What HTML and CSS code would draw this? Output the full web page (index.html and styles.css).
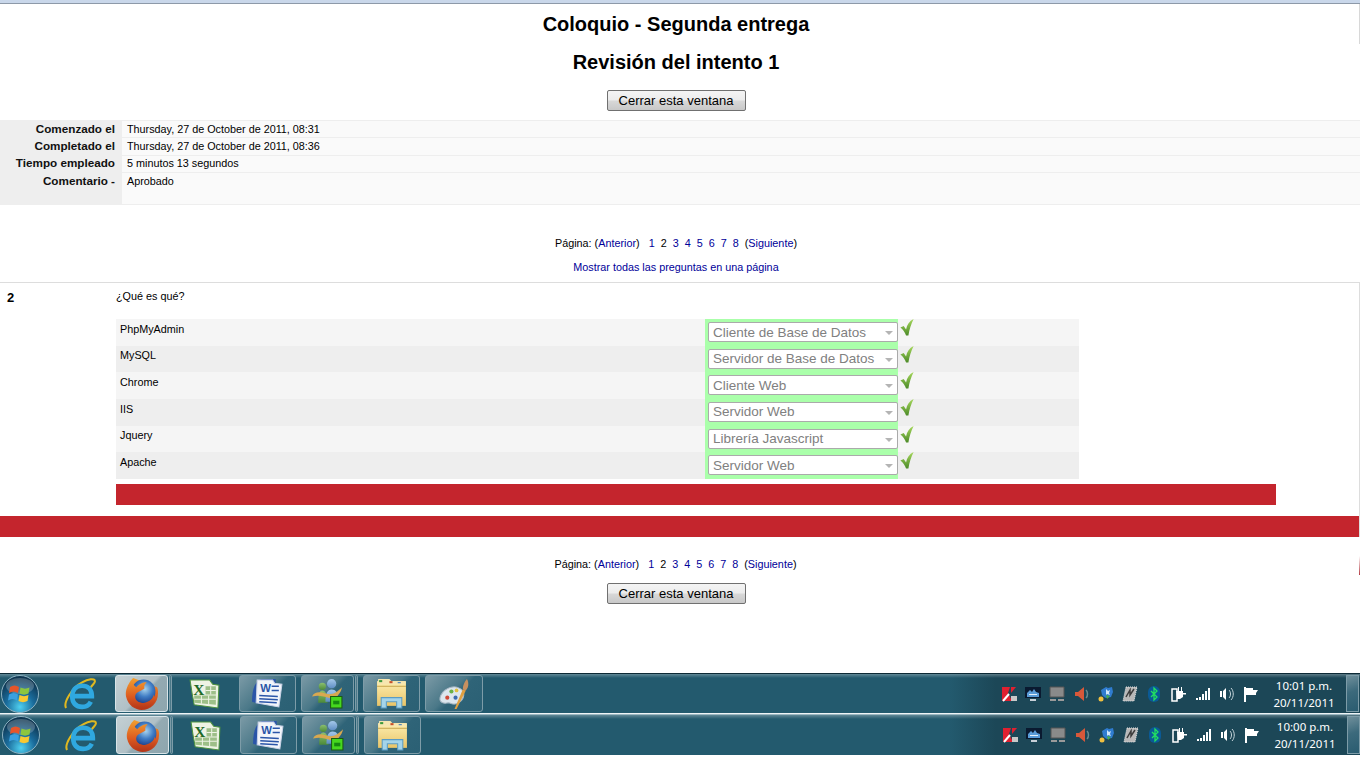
FILE: index.html
```html
<!DOCTYPE html>
<html lang="es">
<head>
    <meta charset="UTF-8">
    <title>Coloquio - Segunda entrega</title>
    <link rel="stylesheet" href="styles.css">
</head>
<body>
<svg class="defs" width="0" height="0">
    <defs>
        <radialGradient id="orb" cx="50%" cy="85%" r="75%">
            <stop offset="0" stop-color="#4fd0f0"/><stop offset=".5" stop-color="#1a6c9c"/><stop offset="1" stop-color="#0e3550"/>
        </radialGradient>
        <radialGradient id="globe" cx="55%" cy="40%" r="60%">
            <stop offset="0" stop-color="#a8d4ee"/><stop offset=".55" stop-color="#3f7cc4"/><stop offset="1" stop-color="#1f4590"/>
        </radialGradient>
        <linearGradient id="fox" x1="0" y1="0" x2="0" y2="1">
            <stop offset="0" stop-color="#f2a030"/><stop offset=".6" stop-color="#dc5a20"/><stop offset="1" stop-color="#b43618"/>
        </linearGradient>
        <linearGradient id="folder" x1="0" y1="0" x2="0" y2="1">
            <stop offset="0" stop-color="#fdeeb0"/><stop offset="1" stop-color="#e8c468"/>
        </linearGradient>
        <linearGradient id="tick" x1="0" y1="0" x2="0" y2="1">
            <stop offset="0" stop-color="#a6d85c"/><stop offset="1" stop-color="#4c8a28"/>
        </linearGradient>
        <linearGradient id="persona-g" x1="0" y1="0" x2="0" y2="1">
            <stop offset="0" stop-color="#8cc070"/><stop offset="1" stop-color="#4c8a38"/>
        </linearGradient>
        <linearGradient id="persona-a" x1="0" y1="0" x2="0" y2="1">
            <stop offset="0" stop-color="#a4c8ea"/><stop offset="1" stop-color="#5f8ec4"/>
        </linearGradient>

        <symbol id="i-start" viewBox="0 0 38 38">
            <circle cx="19" cy="19" r="18.5" fill="url(#orb)" stroke="#8fb4c4"/>
            <ellipse cx="19" cy="11" rx="14" ry="8" fill="#fff" opacity=".22"/>
            <path d="M9 12c3-2 6-2 9 0l-1 6c-3-2-6-2-9 0z" fill="#e8552a"/>
            <path d="M19.500 12.500c3 1.500 6 1.500 9 0l-1 6c-3 1.500-6 1.500-9 0z" fill="#8cc63e"/>
            <path d="M8 19.500c3-2 6-2 9 0l-1 6c-3-2-6-2-9 0z" fill="#3aa0e0"/>
            <path d="M18.500 20c3 1.500 6 1.500 9 0l-1 6c-3 1.500-6 1.500-9 0z" fill="#f8c830"/>
        </symbol>
        <symbol id="i-ie" viewBox="0 0 32 32">
            <path d="M2 30C-1 25 8 10 18 5c5-3 12-4 12-1 0 2-2 3-4 6" fill="none" stroke="#e0b820" stroke-width="2"/>
            <path d="M8 18.500H27C27 12 23 8.500 17.500 8.500 11.500 8.500 8 13 8 19s3.500 10 9.500 10c4 0 7-2 8.500-5" fill="none" stroke="#2fa8e0" stroke-width="4.500"/>
        </symbol>
        <symbol id="i-firefox" viewBox="0 0 32 32">
            <path d="M8 1C2 7 0 14 1 19c2 9 9 13 15 13 9 0 16-7 16-16 0-2 0-4-1-6z" fill="url(#fox)"/>
            <circle cx="18" cy="14" r="11.500" fill="url(#globe)"/>
            <path d="M8 1c-1 4 0 7 3 9 2-3 6-5 10-5-2 2-3 4-2 6-3 3-8 3-9 7-1 5 4 8 9 7 5-1 8-4 9-8l1 7c-4 6-12 9-19 5C2 26 0 18 3 10c1-3 3-7 5-9z" fill="url(#fox)"/>
        </symbol>
        <symbol id="i-excel" viewBox="0 0 32 32">
            <path d="M2 3h19l3 4 6 1-1 22-23-3-2-11z" fill="#eef3e4" stroke="#4e9440"/>
            <path d="M6 18h21v9l-21-2z M17 9h10v8H17z" fill="#9dbf88"/>
            <path d="M6 21.500h21M13 18v8M20 18v9M17 13h10M22 9v8" stroke="#eef3e4"/>
            <text x="5" y="17" class="svg-x">X</text>
        </symbol>
        <symbol id="i-word" viewBox="0 0 32 32">
            <path d="M1 24C1 12 4 4 10 2h14v3L10 27z" fill="#2a55a8"/>
            <path d="M6 3h15l2 3 7 1-3 22-22-4z" fill="#f2f5fa" stroke="#c8d2e6"/>
            <text x="9" y="15" class="svg-w">W</text>
            <path d="M20 9h7M20 13h7M8 18l18 1M8 21l18 1M8 24l17 1" stroke="#2a55a8" stroke-width="1.500"/>
        </symbol>
        <symbol id="i-msn" viewBox="0 0 32 32">
            <circle cx="11" cy="9" r="3.500" fill="url(#persona-g)"/>
            <circle cx="20" cy="6.500" r="4.500" fill="url(#persona-a)"/>
            <path d="M7 25c0-8 1-12 4-12s5 4 5 12z" fill="url(#persona-g)"/>
            <path d="M14 24c0-8 2-12 6-12s6 3 6 8v4z" fill="url(#persona-a)"/>
            <path d="M1 19c2-5 8-5 13-3 6 2 10 0 16-6-1 7-7 12-13 10-5-1-9-3-16-1z" fill="#d8a850"/>
            <path d="M19 19h11v11H19z" fill="#46d81e" stroke="#1a5a10"/>
            <path d="M21.500 23h6v3.500h-6z" fill="#168a10"/>
        </symbol>
        <symbol id="i-explorer" viewBox="0 0 32 32">
            <path d="M2 4h28v24H2z" fill="url(#folder)"/>
            <path d="M3 2h11l2 2h13v3H3z" fill="#f6e6b0"/>
            <path d="M4 3h3v2H4z" fill="#3c9a3c"/><path d="M14 4h3v2h-3z" fill="#c8502a"/><path d="M22 5h3v1h-3z" fill="#3c78b8"/>
            <path d="M2 9h28" stroke="#c8a850"/>
            <path d="M6 20h20v10h-5v-6H11v6H6z" fill="#a4d4ea" stroke="#5a9cc4"/>
        </symbol>
        <symbol id="i-paint" viewBox="0 0 32 32">
            <path d="M2 20C4 12 14 7 21 11c6 3 5 10-1 14-5 3-7 0-10 0-4 1-9 0-8-5z" fill="#dce6ee" stroke="#a8b8c4"/>
            <circle cx="9" cy="20" r="2" fill="#d04a38"/><circle cx="13" cy="14" r="2" fill="#68b048"/><circle cx="18" cy="13" r="1.800" fill="#e0c040"/><circle cx="17" cy="20" r="2" fill="#3a6ab0"/>
            <path d="M24 12l-8 19 2 0 9-18z" fill="#e0a040"/>
            <path d="M24 12c0-4 2-8 4-10 2 3 2 8-1 11z" fill="#c89060"/>
        </symbol>

        <symbol id="t-kaspersky" viewBox="0 0 16 16">
            <path d="M1 1h8l-2 6 4 8H1z" fill="#e02030"/>
            <path d="M10 1h5l-5 6z" fill="#e02030"/>
            <path d="M2 15l6-7" stroke="#fff" stroke-width="2"/>
            <path d="M10 10h6v5h-6z" fill="#c8c8c8"/>
        </symbol>
        <symbol id="t-screen" viewBox="0 0 16 16">
            <path d="M0 1h16v11H0z" fill="#0a1a30"/>
            <path d="M2 7l3-3 2 2 2-3 2 3 3 1v4H2z" fill="#5a9cd8"/>
            <path d="M4 8h8v1H4z" fill="#e4f0fa"/>
            <path d="M5 13h6v2H5z" fill="#c8d0d8"/>
        </symbol>
        <symbol id="t-grey" viewBox="0 0 16 16">
            <path d="M1 1h14v10H1z" fill="#8a8a8a" stroke="#555"/>
            <path d="M1 13h6v2H1zM9 13h6v2H9z" fill="#9a9a9a"/>
        </symbol>
        <symbol id="t-speaker" viewBox="0 0 16 16">
            <path d="M1 6h3l6-5v14l-6-5H1z" fill="#d8583a"/>
            <path d="M12 4c2 2 2 6 0 8" fill="none" stroke="#6a8a90" stroke-width="1.500"/>
        </symbol>
        <symbol id="t-puzzle" viewBox="0 0 16 16">
            <path d="M3 4l5-3 2 1 4-1 1 5-2 5-5 1-2-1-2-2z" fill="#2f7cd0"/>
            <path d="M8 3l2 2 2-1-1 3 1 2-3-1-1 1z" fill="#cfe6fa"/>
            <path d="M8 9l4 1-3 3z" fill="#48b048"/>
            <circle cx="3" cy="13" r="2.500" fill="#f0c040"/>
        </symbol>
        <symbol id="t-disk" viewBox="0 0 16 16">
            <path d="M4 1h11l-3 14H1z" fill="#b8b8b8" stroke="#e4e4e4" stroke-dasharray="1 1"/>
            <path d="M4 11l4-7v5l4-6" fill="none" stroke="#3c3c3c" stroke-width="1.500"/>
        </symbol>
        <symbol id="t-bluetooth" viewBox="0 0 16 16">
            <rect x="2" width="12" height="16" rx="6" fill="#0a5a96"/>
            <path d="M5 5l6 6-3 3V2l3 3-6 6" fill="none" stroke="#22e060" stroke-width="1.300"/>
        </symbol>
        <symbol id="t-plug" viewBox="0 0 16 16">
            <path d="M2 3h5v12H2z" fill="none" stroke="#fff" stroke-width="1.500"/>
            <path d="M6 5h7v6l-3 2H7z" fill="#fff"/>
            <path d="M8 1h1v4H8zM11 1h1v4h-1z" fill="#fff"/><path d="M12 7h4v1.500h-4z" fill="#fff"/>
        </symbol>
        <symbol id="t-signal" viewBox="0 0 16 16">
            <path d="M1 12h2v2H1zM4 11h2v3H4zM7 8h2v6H7zM10 5h2v9h-2zM13 2h2v12h-2z" fill="#fff"/>
        </symbol>
        <symbol id="t-volume" viewBox="0 0 16 16">
            <path d="M1 5h2v6H1zM4 5l3-3v12l-3-3z" fill="#fff"/>
            <path d="M10 4c2 2 2 6 0 8M12 2c3 3 3 9 0 12" fill="none" stroke="#c4d4da"/>
        </symbol>
        <symbol id="t-flag" viewBox="0 0 16 16">
            <path d="M1 1h2v15H1z" fill="#fff"/>
            <path d="M3 2h7v7H3zM10 4h5l-2 3 0 2h-3z" fill="#fff"/>
        </symbol>
        <symbol id="i-tick" viewBox="0 0 14 18">
            <path d="M0 9l3.500-1.500 2.500 3.500C7 6 9.500 2 14 0c-2.500 5-4.500 11-5.500 17.500H6C5 14 2.500 11 0 9z" fill="url(#tick)"/>
        </symbol>
    </defs>
</svg>

<div class="page">
    <div class="topbar"></div>
    <h1 class="titulo">Coloquio - Segunda entrega</h1>
    <h2 class="subtitulo">Revisión del intento 1</h2>
    <div class="cerrar"><button type="button">Cerrar esta ventana</button></div>

    <div class="resumen">
        <div class="fila"><div class="rotulo">Comenzado el</div><div class="dato">Thursday, 27 de October de 2011, 08:31</div></div>
        <div class="fila"><div class="rotulo">Completado el</div><div class="dato">Thursday, 27 de October de 2011, 08:36</div></div>
        <div class="fila"><div class="rotulo">Tiempo empleado</div><div class="dato">5 minutos 13 segundos</div></div>
        <div class="fila"><div class="rotulo">Comentario -</div><div class="dato">Aprobado</div></div>
    </div>

    <div class="paginas paginas-arriba">Página: (<a href="#">Anterior</a>)&nbsp;&nbsp; <a href="#">1</a>&nbsp; 2&nbsp; <a href="#">3</a>&nbsp; <a href="#">4</a>&nbsp; <a href="#">5</a>&nbsp; <a href="#">6</a>&nbsp; <a href="#">7</a>&nbsp; <a href="#">8</a>&nbsp; (<a href="#">Siguiente</a>)</div>
    <div class="paginas mostrar"><a href="#">Mostrar todas las preguntas en una página</a></div>

    <div class="pregunta">
        <div class="numero">2</div>
        <div class="contenido">
            <div class="enunciado">¿Qué es qué?</div>
            <div class="respuestas">
                <div class="resp">
                    <div class="resp-texto">PhpMyAdmin</div>
                    <div class="resp-sel"><span class="combo"><select disabled><option>Cliente de Base de Datos</option></select></span></div>
                    <svg class="tick"><use href="#i-tick"/></svg>
                </div>
                <div class="resp">
                    <div class="resp-texto">MySQL</div>
                    <div class="resp-sel"><span class="combo"><select disabled><option>Servidor de Base de Datos</option></select></span></div>
                    <svg class="tick"><use href="#i-tick"/></svg>
                </div>
                <div class="resp">
                    <div class="resp-texto">Chrome</div>
                    <div class="resp-sel"><span class="combo"><select disabled><option>Cliente Web</option></select></span></div>
                    <svg class="tick"><use href="#i-tick"/></svg>
                </div>
                <div class="resp">
                    <div class="resp-texto">IIS</div>
                    <div class="resp-sel"><span class="combo"><select disabled><option>Servidor Web</option></select></span></div>
                    <svg class="tick"><use href="#i-tick"/></svg>
                </div>
                <div class="resp">
                    <div class="resp-texto">Jquery</div>
                    <div class="resp-sel"><span class="combo"><select disabled><option>Librería Javascript</option></select></span></div>
                    <svg class="tick"><use href="#i-tick"/></svg>
                </div>
                <div class="resp">
                    <div class="resp-texto">Apache</div>
                    <div class="resp-sel"><span class="combo"><select disabled><option>Servidor Web</option></select></span></div>
                    <svg class="tick"><use href="#i-tick"/></svg>
                </div>
            </div>
            <div class="barra-roja"></div>
        </div>
    </div>
    <div class="barra-ancha"></div>

    <div class="pie">
        <div class="paginas">Página: (<a href="#">Anterior</a>)&nbsp;&nbsp; <a href="#">1</a>&nbsp; 2&nbsp; <a href="#">3</a>&nbsp; <a href="#">4</a>&nbsp; <a href="#">5</a>&nbsp; <a href="#">6</a>&nbsp; <a href="#">7</a>&nbsp; <a href="#">8</a>&nbsp; (<a href="#">Siguiente</a>)</div>
        <div class="cerrar cerrar-pie"><button type="button">Cerrar esta ventana</button></div>
    </div>
</div>

<div class="taskbar">
    <div class="start"><svg class="orbe"><use href="#i-start"/></svg></div>
    <div class="task task-ie"><svg><use href="#i-ie"/></svg></div>
    <div class="task boton activo task-ff"><svg><use href="#i-firefox"/></svg></div>
    <div class="astilla"></div>
    <div class="task task-xl tras-astilla"><svg><use href="#i-excel"/></svg></div>
    <div class="task boton task-wd"><svg><use href="#i-word"/></svg></div>
    <div class="task boton task-ms"><svg><use href="#i-msn"/></svg></div>
    <div class="astilla"></div>
    <div class="task boton task-ex"><svg><use href="#i-explorer"/></svg></div>
    <div class="task boton task-pt"><svg><use href="#i-paint"/></svg></div>
    <div class="tray">
        <svg><use href="#t-kaspersky"/></svg><svg><use href="#t-screen"/></svg><svg><use href="#t-grey"/></svg><svg><use href="#t-speaker"/></svg><svg><use href="#t-puzzle"/></svg><svg><use href="#t-disk"/></svg><svg><use href="#t-bluetooth"/></svg><svg><use href="#t-plug"/></svg><svg><use href="#t-signal"/></svg><svg><use href="#t-volume"/></svg><svg><use href="#t-flag"/></svg>
    </div>
    <div class="reloj">10:01 p.m.<br>20/11/2011</div>
    <div class="escritorio"></div>
</div>

<div class="taskbar taskbar-2">
    <div class="start"><svg class="orbe"><use href="#i-start"/></svg></div>
    <div class="task task-ie"><svg><use href="#i-ie"/></svg></div>
    <div class="task boton activo task-ff"><svg><use href="#i-firefox"/></svg></div>
    <div class="astilla"></div>
    <div class="task task-xl tras-astilla"><svg><use href="#i-excel"/></svg></div>
    <div class="task boton task-wd"><svg><use href="#i-word"/></svg></div>
    <div class="task boton task-ms"><svg><use href="#i-msn"/></svg></div>
    <div class="astilla"></div>
    <div class="task boton task-ex"><svg><use href="#i-explorer"/></svg></div>
    <div class="tray">
        <svg><use href="#t-kaspersky"/></svg><svg><use href="#t-screen"/></svg><svg><use href="#t-grey"/></svg><svg><use href="#t-speaker"/></svg><svg><use href="#t-puzzle"/></svg><svg><use href="#t-disk"/></svg><svg><use href="#t-bluetooth"/></svg><svg><use href="#t-plug"/></svg><svg><use href="#t-signal"/></svg><svg><use href="#t-volume"/></svg><svg><use href="#t-flag"/></svg>
    </div>
    <div class="reloj">10:00 p.m.<br>20/11/2011</div>
    <div class="escritorio"></div>
</div>
</body>
</html>
```

FILE: styles.css
```css
html, body {
    margin: 0;
    background: #fff;
    overflow: hidden;
}
body {
    width: 1366px;
    height: 768px;
    font-family: "Liberation Sans", Arial, sans-serif;
    color: #000;
}
.defs {
    display: block;
}
a {
    color: #000099;
    text-decoration: none;
}

.page {
    width: 1360px;
    height: 673px;
}
.topbar {
    height: 3px;
    background-color: #c9d7ea;
    border-bottom: 1px solid #8d99a8;
}
.titulo, .subtitulo {
    margin: 0;
    padding-right: 8px;
    font-size: 20px;
    font-weight: bold;
    text-align: center;
}
.titulo {
    padding-right: 7px;
    line-height: 40px;
    border-right: 1px solid #d8d8d8;
}
.subtitulo {
    line-height: 36px;
}
.cerrar {
    margin-top: 10px;
    padding-right: 8px;
    text-align: center;
}
.cerrar button {
    display: block;
    width: 139px;
    height: 21px;
    margin: 0 auto;
    padding: 0;
    font-family: inherit;
    font-size: 13px;
    color: #000;
    border: 1px solid #707070;
    border-radius: 2px;
    background: linear-gradient(#f4f4f4 0, #ececec 48%, #d8d8d8 52%, #c8c8c8 100%);
}

.resumen {
    margin-top: 9px;
    border-top: 1px solid #eee;
    font-size: 10.800px;
}
.fila {
    display: flex;
    height: 17px;
    line-height: 16px;
}
.fila:nth-child(2) {
    height: 18px;
}
.fila:nth-child(3) {
    line-height: 14px;
}
.fila:nth-child(4) {
    height: 32px;
}
.rotulo {
    width: 115px;
    padding-right: 7px;
    text-align: right;
    font-size: 11.700px;
    font-weight: bold;
    background-color: #eee;
    color: #111;
}
.dato {
    flex: 1;
    padding-left: 5px;
    background-color: #fafafa;
    border-bottom: 1px solid #eee;
}

.paginas {
    padding-right: 8px;
    font-size: 10.800px;
    line-height: 16px;
    text-align: center;
}
.paginas-arriba {
    margin-top: 30px;
}
.mostrar {
    margin-top: 8px;
}

.pregunta {
    display: flex;
    margin-top: 7px;
    height: 233px;
    border-top: 1px solid #ddd;
    border-right: 1px solid #ddd;
}
.numero {
    width: 109px;
    padding: 7px 0 0 7px;
    font-size: 13px;
    font-weight: bold;
    line-height: 15px;
}
.contenido {
    flex: 1;
}
.enunciado {
    height: 36px;
    padding-top: 7px;
    box-sizing: border-box;
    font-size: 10.800px;
    line-height: 13px;
}
.respuestas {
    width: 963px;
}
.resp {
    display: flex;
    height: 26.670px;
}
.resp:nth-child(odd) {
    background-color: #f5f5f5;
}
.resp:nth-child(even) {
    background-color: #eee;
}
.resp-texto {
    width: 585px;
    padding: 2.800px 0 0 4px;
    font-size: 10.800px;
    line-height: 14px;
}
.resp-sel {
    width: 190px;
    padding: 3px 0 0 3px;
    background-color: #aaffaa;
}
.combo {
    display: block;
    position: relative;
    height: 20px;
}
.combo select {
    display: block;
    width: 100%;
    height: 20px;
    padding: 0 0 0 4px;
    font-family: inherit;
    font-size: 13.500px;
    color: #808080;
    opacity: 1;
    background: #fff;
    border: 1px solid #aaa;
    border-radius: 2px;
    appearance: none;
}
.combo::after {
    content: "";
    position: absolute;
    right: 5px;
    top: 9px;
    border-left: 4px solid transparent;
    border-right: 4px solid transparent;
    border-top: 4px solid #b4b4b4;
}
.tick {
    width: 14px;
    height: 17px;
    margin-left: 2px;
}
.barra-roja {
    width: 1160px;
    height: 21px;
    margin-top: 5px;
    background-color: #c4252d;
}
.barra-ancha {
    height: 21px;
    background-color: #c4252d;
    border-right: 1px solid #ddd;
}

.pie {
    height: 38px;
    padding-top: 19px;
    box-sizing: border-box;
    border-right: 1px solid transparent;
    border-image: linear-gradient(transparent 19px, #b03038 38px, transparent 38px) 1;
}
.cerrar-pie {
    margin-top: 11px;
    padding-right: 7px;
}

.taskbar {
    display: flex;
    align-items: stretch;
    box-sizing: border-box;
    width: 1360px;
    height: 41px;
    padding: 1px 1px 1px 0;
    background: linear-gradient(rgba(255, 255, 255, .28) 0, rgba(255, 255, 255, 0) 4px),
        linear-gradient(90deg, #235a6e 0, #235a6e 950px, #1c4757 996px, #1c4757 100%);
    border-top: 1px solid #0d2a36;
    border-bottom: 1px solid #eef4f6;
}
.taskbar-2 {
    padding-left: 1px;
    padding-right: 0;
    border-top-color: #9cb8c2;
    border-bottom: 0;
}
.start {
    display: flex;
    align-items: center;
    width: 45px;
}
.orbe {
    width: 38px;
    height: 38px;
    margin-left: 1px;
}
.task {
    display: flex;
    align-items: center;
    justify-content: center;
    box-sizing: border-box;
    margin-left: 5px;
}
.task svg {
    width: 33px;
    height: 33px;
}
.boton {
    border: 1px solid #7d9ca8;
    border-radius: 3px;
    background: linear-gradient(135deg, #7b9aa6 0, #4a7888 45%, #2f6478 55%, #2b6074 100%);
}
.activo {
    border-color: #d8e4e8;
    background: linear-gradient(135deg, #c4d0d4 0, #b0c0c6 50%, #94aab2 55%, #8ea6ae 100%);
}
.task-ie { width: 60px; }
.task-ff { width: 53px; }
.task-xl { width: 59px; }
.task-wd { width: 57px; }
.task-ms { width: 53px; }
.task-ex { width: 57px; }
.task-pt { width: 58px; }
.astilla {
    box-sizing: border-box;
    width: 3px;
    margin-left: 1px;
    border: 1px solid #7d9ca8;
    border-radius: 2px;
    background-color: #4a7888;
}
.tras-astilla {
    margin-left: 3px;
}
.tray {
    display: flex;
    align-items: center;
    box-sizing: border-box;
    width: 265px;
    margin-left: auto;
}
.tray svg {
    flex: 0 0 16px;
    width: 16px;
    height: 16px;
    margin: 0 4.100px;
}
.reloj {
    width: 84px;
    padding-top: 2px;
    font-family: "Noto Sans", sans-serif;
    font-size: 11.500px;
    line-height: 17px;
    text-align: center;
    color: #fff;
}
.escritorio {
    width: 13px;
    border: 1px solid #7d9ca8;
    box-sizing: border-box;
    background: linear-gradient(160deg, #6f8f9b 0, #3c6a7c 45%, #2a5c70 100%);
}
.svg-x {
    font: bold 15px "Liberation Serif", serif;
    fill: #1e6a28;
}
.svg-w {
    font: bold 11px "Liberation Sans", sans-serif;
    fill: #2a55a8;
}
```
